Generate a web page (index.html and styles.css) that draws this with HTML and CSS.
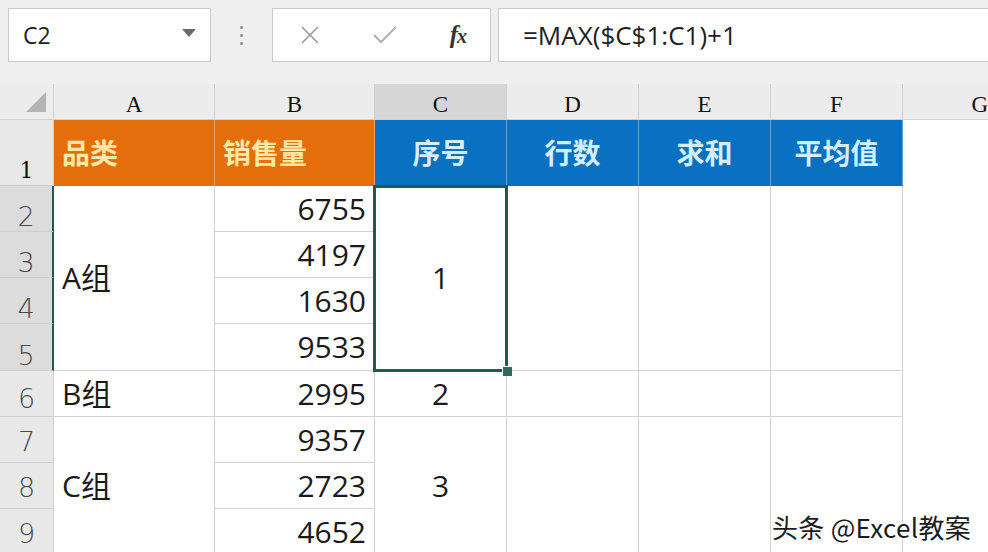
FILE: index.html
```html
<!DOCTYPE html>
<html lang="zh-CN">
<head>
<meta charset="utf-8">
<title>Excel</title>
<link rel="stylesheet" href="styles.css">
</head>
<body>
<div class="app">
  <div class="toolbar">
    <div class="namebox">
      <span class="ref">C2</span>
      <svg class="caret" width="14" height="8" viewBox="0 0 14 8"><path d="M0 0H14L7 8Z" fill="#6b6b6b"/></svg>
    </div>
    <div class="grip"><i></i><i></i><i></i></div>
    <div class="fbtns">
      <svg class="ico" width="20" height="20" viewBox="0 0 20 20"><path d="M2 2L18 18M18 2L2 18" stroke="#9a9a9a" stroke-width="1.6" fill="none"/></svg>
      <svg class="ico" width="24" height="20" viewBox="0 0 24 20"><path d="M1 10L8 17L23 2" stroke="#b0b0b0" stroke-width="2" fill="none"/></svg>
      <span class="fx"><i>f</i><i class="x">x</i></span>
    </div>
    <div class="formula">=MAX($C$1:C1)+1</div>
  </div>

  <div class="sheet">
    <div class="corner"><svg width="20" height="20" viewBox="0 0 20 20"><path d="M20 0V20H0Z" fill="#b4b4b4"/></svg></div>
    <div class="colh">A</div>
    <div class="colh">B</div>
    <div class="colh colh-sel">C</div>
    <div class="colh">D</div>
    <div class="colh">E</div>
    <div class="colh">F</div>
    <div class="colh colh-last">G</div>

    <div class="rowh rowh-1">1</div>
    <div class="cell hd orange left">品类</div>
    <div class="cell hd orange left">销售量</div>
    <div class="cell hd blue">序号</div>
    <div class="cell hd blue">行数</div>
    <div class="cell hd blue">求和</div>
    <div class="cell hd blue">平均值</div>
    <div class="gcol"></div>

    <div class="rowh sel">2</div>
    <div class="cell left span4">A组</div>
    <div class="cell num">6755</div>
    <div class="cell center span4 active">1<span class="handle"></span></div>
    <div class="cell span4"></div>
    <div class="cell span4"></div>
    <div class="cell span4"></div>

    <div class="rowh sel">3</div>
    <div class="cell num">4197</div>

    <div class="rowh sel">4</div>
    <div class="cell num">1630</div>

    <div class="rowh sel">5</div>
    <div class="cell num">9533</div>

    <div class="rowh r6">6</div>
    <div class="cell left">B组</div>
    <div class="cell num">2995</div>
    <div class="cell center">2</div>
    <div class="cell"></div>
    <div class="cell"></div>
    <div class="cell"></div>

    <div class="rowh">7</div>
    <div class="cell left span3">C组</div>
    <div class="cell num">9357</div>
    <div class="cell center span3">3</div>
    <div class="cell span3"></div>
    <div class="cell span3"></div>
    <div class="cell span3"></div>

    <div class="rowh">8</div>
    <div class="cell num">2723</div>

    <div class="rowh">9</div>
    <div class="cell num">4652</div>
  </div>

  <div class="watermark">头条 @Excel教案</div>
</div>
</body>
</html>
```

FILE: styles.css
```css
* { box-sizing: border-box; }
html, body { margin: 0; padding: 0; }
body {
  width: 988px;
  height: 552px;
  overflow: hidden;
  background: #efefef;
  font-family: "Open Sans", "Noto Sans CJK SC", sans-serif;
  color: #1e1e1e;
}
.app { position: relative; width: 988px; height: 552px; overflow: hidden; }

/* ---------- toolbar ---------- */
.toolbar {
  height: 84px;
  display: flex;
  align-items: flex-start;
  padding: 8px 0 0 8px;
  background: #efefef;
}
.namebox {
  width: 203px;
  height: 54px;
  background: #fff;
  border: 1px solid #c9c9c9;
  display: flex;
  align-items: center;
  justify-content: space-between;
  padding: 0 14px 0 14px;
}
.ref { font-size: 23px; color: #222; }
.caret { margin-top: -4px; }
.grip {
  width: 61px;
  height: 54px;
  display: flex;
  flex-direction: column;
  align-items: center;
  justify-content: center;
  gap: 5px;
}
.grip i { display: block; width: 3px; height: 3px; background: #8a8a8a; border-radius: 50%; }
.fbtns {
  width: 219px;
  height: 54px;
  background: #fff;
  border: 1px solid #c9c9c9;
  display: flex;
  align-items: center;
  justify-content: space-between;
  padding: 0 24px 0 27px;
}
.fx {
  font-family: "Liberation Serif", serif;
  font-style: italic;
  font-weight: bold;
  font-size: 25px;
  color: #333;
  letter-spacing: -1px;
}
.fx .x { font-size: 20px; }
.formula {
  flex: 1;
  height: 54px;
  margin-left: 7px;
  margin-right: -4px;
  background: #fff;
  border: 1px solid #c9c9c9;
  display: flex;
  align-items: center;
  padding-left: 24px;
  font-size: 26px;
  color: #222;
}

/* ---------- sheet ---------- */
.sheet {
  display: grid;
  grid-template-columns: 54px 161px 160px 132px 132px 132px 132px 85px;
  grid-template-rows: 36px 66px 46px 46px 46px 47px 46px 46px 46px 46px;
  background: #fff;
}
.corner {
  background: #ececec;
  border-right: 1px solid #d2d2d2;
  border-bottom: 1px solid #d2d2d2;
  display: flex;
  align-items: flex-end;
  justify-content: flex-end;
  padding: 0 7px 7px 0;
}
.colh {
  background: #ececec;
  border-right: 1px solid #d2d2d2;
  border-bottom: 1px solid #d2d2d2;
  display: flex;
  align-items: flex-end;
  justify-content: center;
  padding-bottom: 3px;
  font-family: "Liberation Serif", serif;
  font-size: 23px;
  line-height: 1;
  color: #111;
}
.colh-sel { background: #d6d6d6; }
.colh-last { border-right: none; justify-content: flex-end; padding-right: 0; }
.rowh {
  background: #e8e8e8;
  border-right: 1px solid #cfcfcf;
  border-bottom: 1px solid #cfcfcf;
  display: flex;
  align-items: center;
  justify-content: center;
  padding-top: 4px;
  font-family: "DejaVu Sans", sans-serif;
  font-weight: 200;
  font-size: 27px;
  line-height: 1;
  color: #4a4a4a;
  grid-column: 1;
}
.rowh.r6 { padding-top: 10px; }
.rowh-1 {
  align-items: flex-end;
  padding-top: 0;
  padding-bottom: 3px;
  font-family: "DejaVu Serif", serif;
  font-size: 22px;
  color: #111;
}
.rowh.sel { background: #dcdcdc; border-right: 2px solid #1f5b4d; padding-top: 16px; }

.cell {
  border-right: 1px solid #d3d3d3;
  border-bottom: 1px solid #d3d3d3;
  display: flex;
  align-items: center;
  justify-content: center;
  font-size: 30px;
  line-height: 1;
  color: #1a1a1a;
}
.cell.left { justify-content: flex-start; padding-left: 8px; }
.cell.num { justify-content: flex-end; padding-right: 8px; }
.span4 { grid-row: span 4; }
.span3 { grid-row: span 3; }
.gcol { grid-row: span 9; background: #fff; }

.hd { font-size: 28px; font-weight: bold; }
.orange { background: #e46e0c; color: #ffe7a6; border-right-color: #f0a25e; border-bottom-color: #e46e0c; }
.blue { background: #0a70c2; color: #d3efff; border-right-color: #5aa6e0; border-bottom-color: #0a70c2; }

.active { position: relative; }
.active::before {
  content: "";
  position: absolute;
  left: -2px;
  top: -1px;
  right: -2px;
  bottom: -2px;
  border: 3px solid #1f5b4d;
}
.handle {
  position: absolute;
  right: -6px;
  bottom: -6px;
  width: 10px;
  height: 10px;
  background: #2a6b5c;
  border-top: 1px solid #fff;
  border-left: 1px solid #fff;
  z-index: 2;
}

.watermark {
  position: absolute;
  left: 772px;
  top: 511px;
  font-family: "Noto Sans CJK SC", "Open Sans", sans-serif;
  font-size: 26px;
  letter-spacing: 0.3px;
  color: #1b1b1b;
  text-shadow: 1px 1px 0 #fff, -1px -1px 0 #fff, 1px -1px 0 #fff, -1px 1px 0 #fff;
  white-space: nowrap;
  line-height: 1.2;
}
```
